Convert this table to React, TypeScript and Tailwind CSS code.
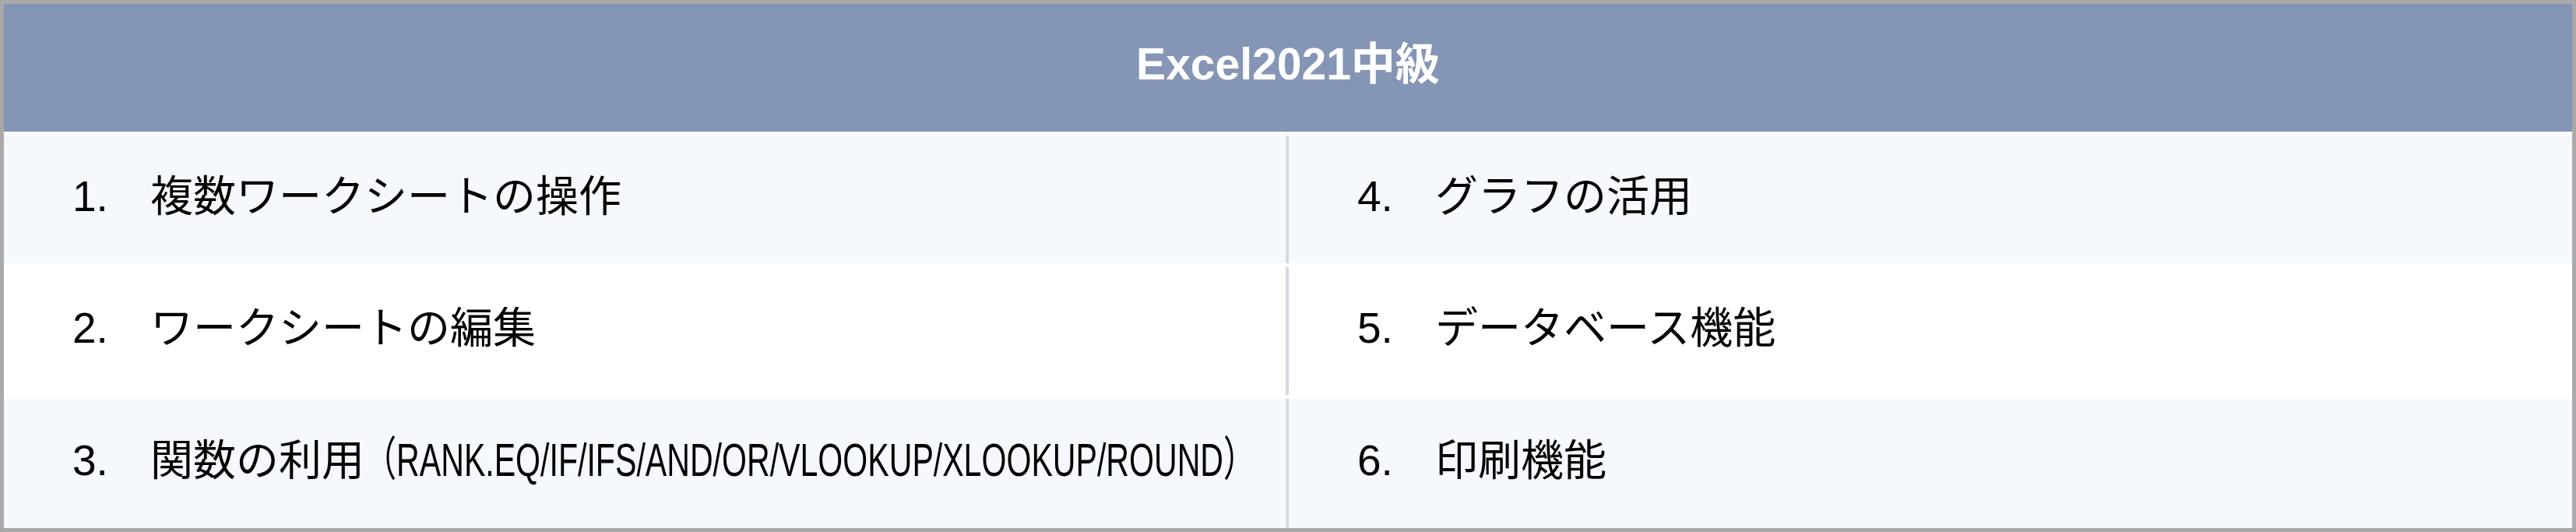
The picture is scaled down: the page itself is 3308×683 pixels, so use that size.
import React from "react";

const font = "font-['Liberation_Sans','Noto_Sans_CJK_JP',sans-serif]";

type Item = { no: string; label: string; note?: string };

const rows: [Item, Item][] = [
  [
    { no: "1.", label: "複数ワークシートの操作" },
    { no: "4.", label: "グラフの活用" },
  ],
  [
    { no: "2.", label: "ワークシートの編集" },
    { no: "5.", label: "データベース機能" },
  ],
  [
    {
      no: "3.",
      label: "関数の利用",
      note: "（RANK.EQ/IF/IFS/AND/OR/VLOOKUP/XLOOKUP/ROUND）",
    },
    { no: "6.", label: "印刷機能" },
  ],
];

function Cell({ item, left }: { item: Item; left?: boolean }) {
  return (
    <div
      className={
        left
          ? "flex w-[1650px] shrink-0 items-center pl-[88px] pb-[8px] border-r-4 border-[#d6d9df]"
          : "flex flex-1 items-center pl-[88px] pb-[8px]"
      }
    >
      <span className="w-[100px] shrink-0 text-[55px] leading-none text-black">{item.no}</span>
      <span className="text-[55px] leading-none text-black whitespace-nowrap">{item.label}</span>
      {item.note && (
        <span className="inline-block origin-left scale-x-[0.685] text-[60px] leading-none text-black whitespace-nowrap">
          {item.note}
        </span>
      )}
    </div>
  );
}

export default function App() {
  return (
    <div className={`flex h-[683px] w-[3308px] flex-col border-[5px] border-[#a9a9a9] bg-white ${font}`}>
      <div className="flex h-[164px] shrink-0 items-center justify-center bg-[#8595b5] pb-[10px]">
        <span className="text-[57px] font-bold leading-none text-white">Excel2021中級</span>
      </div>
      <div className="mt-[5px] flex h-[164px] shrink-0 bg-[#f5f8fd]">
        <Cell item={rows[0][0]} left />
        <Cell item={rows[0][1]} />
      </div>
      <div className="mt-[5px] flex h-[164px] shrink-0 bg-white">
        <Cell item={rows[1][0]} left />
        <Cell item={rows[1][1]} />
      </div>
      <div className="mt-[5px] flex flex-1 bg-[#f5f8fd]">
        <Cell item={rows[2][0]} left />
        <Cell item={rows[2][1]} />
      </div>
    </div>
  );
}
